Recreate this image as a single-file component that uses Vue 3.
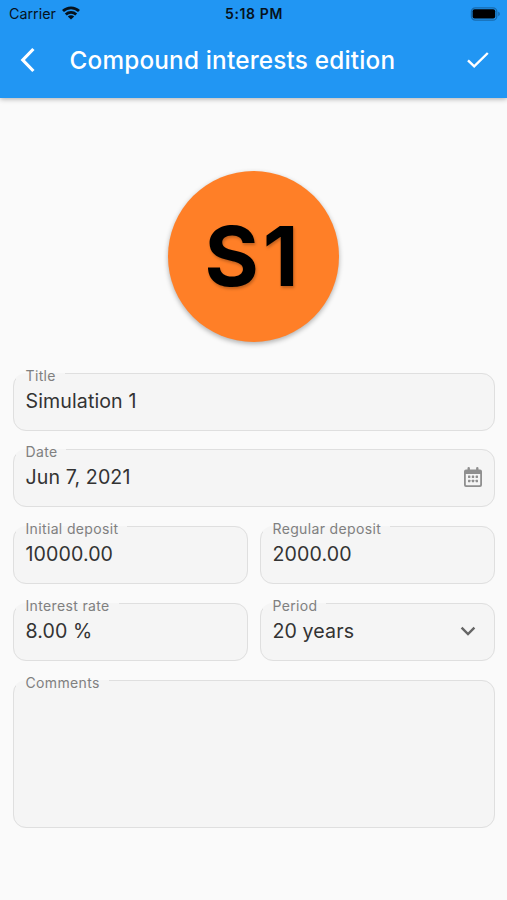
<script setup>
const fields = [
  { id: 'title', label: 'Title', value: 'Simulation 1', wide: true },
  { id: 'date', label: 'Date', value: 'Jun 7, 2021', wide: true, icon: 'calendar' },
  { id: 'initial', label: 'Initial deposit', value: '10000.00' },
  { id: 'regular', label: 'Regular deposit', value: '2000.00' },
  { id: 'rate', label: 'Interest rate', value: '8.00 %' },
  { id: 'period', label: 'Period', value: '20 years', icon: 'chevron' },
  { id: 'comments', label: 'Comments', value: '', wide: true },
]
</script>

<template>
  <div class="screen">
    <header class="top">
      <div class="status">
        <div class="carrier">
          <span>Carrier</span>
          <svg class="wifi" width="18" height="14" viewBox="0 0 18 14">
            <g fill="none" stroke="#06121c" stroke-width="2.8">
              <path d="M1 5.1C5.5 .8 12.5 .8 17 5.1" />
              <path d="M3.8 8.4C6.8 5.6 11.2 5.6 14.2 8.4" />
            </g>
            <path d="M5.8 10.4C7.6 8.7 10.4 8.7 12.2 10.4L9 13.6Z" fill="#06121c" />
          </svg>
        </div>
        <span class="time">5:18 PM</span>
        <svg class="battery" width="31" height="14" viewBox="0 0 31 14">
          <rect x="1.4" y=".8" width="25.4" height="12.4" rx="4" fill="none" stroke="#176bae" stroke-width="1.3" />
          <rect x="2.6" y="2.2" width="22.6" height="9.4" rx="2" fill="#000" />
          <path d="M28.2 4.8C30.4 5.4 30.4 8.6 28.2 9.2Z" fill="#176bae" />
        </svg>
      </div>
      <div class="bar">
        <svg class="back" width="18" height="26" viewBox="0 0 18 26">
          <path d="M15.4 2L4.8 13L15.4 24" fill="none" stroke="#fff" stroke-width="3.2" />
        </svg>
        <h1>Compound interests edition</h1>
        <svg class="check" width="24" height="18" viewBox="0 0 24 18">
          <path d="M2 9.4L8.2 15.4L21.8 2" fill="none" stroke="#fff" stroke-width="2.4" />
        </svg>
      </div>
    </header>

    <main>
      <div class="avatar"><span>S1</span></div>
      <form class="form">
        <fieldset
          v-for="f in fields"
          :key="f.id"
          class="field"
          :class="{ wide: f.wide }"
        >
          <legend>{{ f.label }}</legend>
          <div class="content">
            <span class="value">{{ f.value }}</span>
            <svg v-if="f.icon === 'calendar'" class="calendar" width="18" height="20" viewBox="0 0 18 20">
              <path
                fill="#8f8f8f"
                fill-rule="evenodd"
                d="M2 2.5H3.5V1.2Q3.5 0 4.7 0T5.9 1.2V2.5H12.1V1.2Q12.1 0 13.3 0T14.5 1.2V2.5H16Q18 2.5 18 4.5V18Q18 20 16 20H2Q0 20 0 18V4.5Q0 2.5 2 2.5ZM1.8 7V17.4Q1.8 18.2 2.6 18.2H15.4Q16.2 18.2 16.2 17.4V7Z"
              />
              <g fill="#8f8f8f">
                <rect x="4" y="8.6" width="2.4" height="2.4" rx=".4" />
                <rect x="7.8" y="8.6" width="2.4" height="2.4" rx=".4" />
                <rect x="11.6" y="8.6" width="2.4" height="2.4" rx=".4" />
                <rect x="4" y="12.8" width="2.4" height="2.4" rx=".4" />
                <rect x="7.8" y="12.8" width="2.4" height="2.4" rx=".4" />
                <rect x="11.6" y="12.8" width="2.4" height="2.4" rx=".4" />
              </g>
            </svg>
            <svg v-if="f.icon === 'chevron'" class="chevron" width="16" height="10" viewBox="0 0 16 10">
              <path d="M1.6 1.6L8 8L14.4 1.6" fill="none" stroke="#666" stroke-width="2.4" />
            </svg>
          </div>
        </fieldset>
      </form>
    </main>
  </div>
</template>

<style>
body {
  margin: 0;
  background: #fafafa;
}
</style>

<style scoped>
.screen {
  width: 507px;
  height: 900px;
  overflow: hidden;
  background: #fafafa;
  font-family: Inter, "Liberation Sans", sans-serif;
  color: #333;
}
.top {
  height: 98px;
  background: #2196f3;
  box-shadow: 0 1px 5px rgba(0, 0, 0, 0.32);
}
.status {
  display: grid;
  grid-template-columns: 1fr auto 1fr;
  align-items: center;
  height: 27px;
  padding: 0 6px 0 9px;
  font-size: 14.3px;
  color: #06121c;
}
.carrier {
  display: flex;
  align-items: center;
  gap: 6px;
}
.wifi {
  margin-top: -2px;
}
.time {
  margin-right: 2px;
  font-size: 14px;
  font-weight: 600;
  letter-spacing: 0.6px;
}
.battery {
  justify-self: end;
}
.bar {
  display: flex;
  align-items: center;
  height: 66px;
  padding: 0 17px 0 18px;
}
.back {
  flex: none;
}
h1 {
  flex: 1;
  margin: 0 0 0 33.5px;
  font-size: 24.3px;
  font-weight: 500;
  line-height: 30px;
  letter-spacing: 0.2px;
  color: #fff;
  white-space: nowrap;
}
main {
  padding: 72.5px 12.5px 0;
}
.avatar {
  display: flex;
  align-items: center;
  justify-content: center;
  width: 171px;
  height: 171px;
  margin: 0 auto;
  border-radius: 50%;
  background: #ff7f27;
  box-shadow: 0 2px 5px rgba(0, 0, 0, 0.3);
  font-size: 83px;
  font-weight: 700;
  line-height: 1;
  letter-spacing: 4px;
  color: #000;
  text-shadow: 1px 2px 3px rgba(0, 0, 0, 0.25);
}
.form {
  display: grid;
  grid-template-columns: 1fr 1fr;
  grid-template-rows: repeat(4, 67.5px) 157px;
  gap: 9.4px 12px;
  margin-top: 21.5px;
}
.field {
  box-sizing: border-box;
  min-width: 0;
  margin: 0;
  padding: 0;
  border: 1px solid #dfdfdf;
  border-radius: 13px;
  background: #f5f5f5;
}
.wide {
  grid-column: 1 / -1;
}
legend {
  height: 15.5px;
  margin-left: 2px;
  padding: 4.5px 9px 0 10px;
  font-size: 14px;
  line-height: 16px;
  letter-spacing: 0.35px;
  color: #808080;
}
.content {
  display: flex;
  align-items: center;
  justify-content: space-between;
  height: 24px;
  margin-top: 5.6px;
  padding: 0 12px;
}
.value {
  font-size: 19.6px;
  line-height: 24px;
  letter-spacing: 0.1px;
  white-space: nowrap;
}
.chevron {
  margin-right: 6px;
}
</style>
